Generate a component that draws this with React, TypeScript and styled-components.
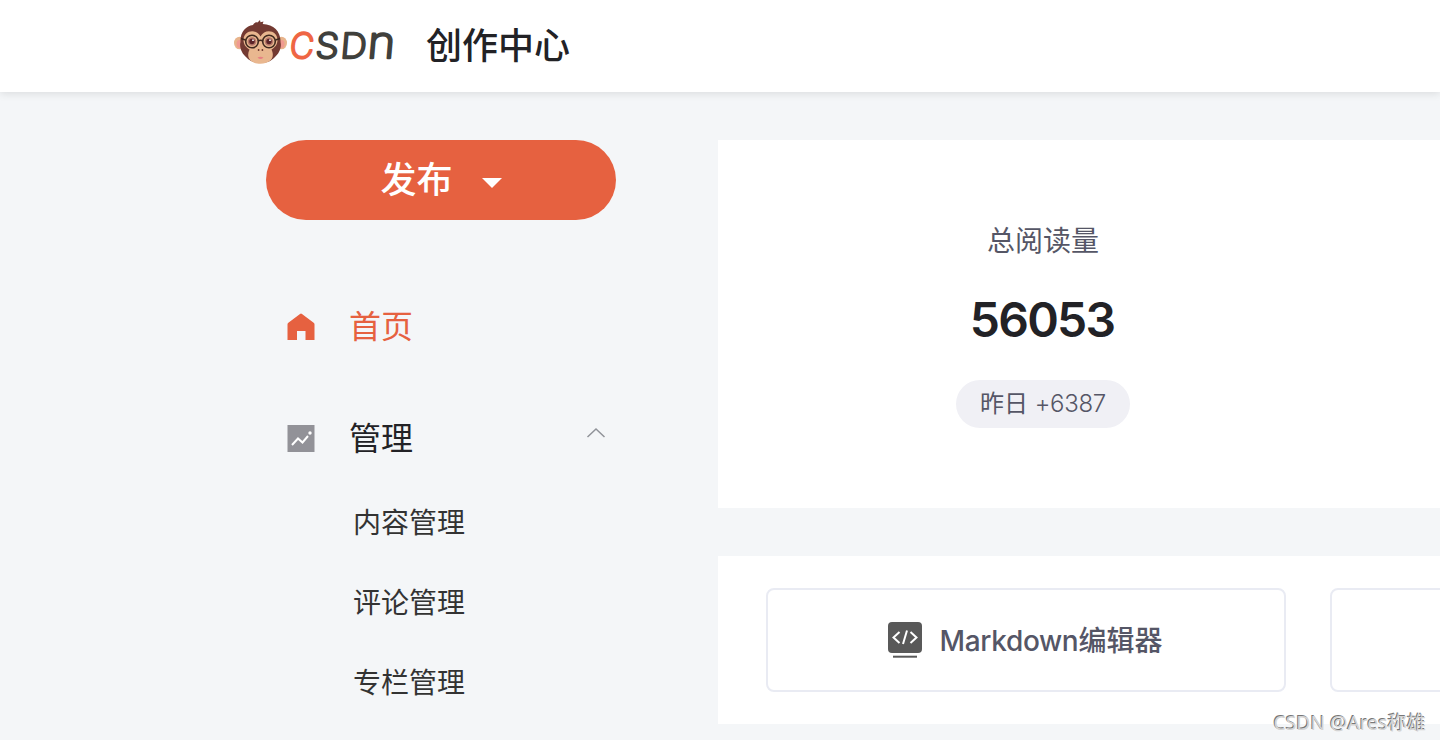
import React from "react";
import styled, { createGlobalStyle } from "styled-components";

const GlobalStyle = createGlobalStyle`
  * { box-sizing: border-box; }
  body {
    margin: 0;
    background: #f4f6f8;
    color: #222226;
    font-family: Inter, "Noto Sans CJK SC", sans-serif;
  }
`;

const Page = styled.div`
  width: 100%;
  height: 740px;
  overflow: hidden;
  position: relative;
  display: flex;
  flex-direction: column;
`;

const Header = styled.header`
  flex: none;
  height: 92px;
  padding-left: 232px;
  display: flex;
  align-items: center;
  background: #fff;
  box-shadow: 0 2px 8px rgba(0, 0, 0, 0.1);
`;

const HeaderTitle = styled.h1`
  margin: 0 0 0 26px;
  font-size: 36px;
  line-height: 52px;
  font-weight: 500;
`;

const Body = styled.div`
  display: flex;
  padding: 48px 0 0 266px;
`;

const Sidebar = styled.aside`
  flex: none;
  width: 350px;
  margin-right: 102px;
`;

const PublishButton = styled.button`
  width: 350px;
  height: 80px;
  padding: 0;
  border: 0;
  border-radius: 40px;
  background: #e66140;
  color: #fff;
  font: 500 36px/52px Inter, "Noto Sans CJK SC", sans-serif;
  display: flex;
  align-items: center;
  justify-content: center;
  gap: 29px;
`;

const Caret = styled.span`
  margin-top: 5px;
  border: 10px solid transparent;
  border-top-color: #fff;
  border-bottom: 0;
`;

const MenuItem = styled.div<{ $active?: boolean }>`
  height: 112px;
  padding: 0 10px 0 20px;
  display: flex;
  align-items: center;
  font-size: 32px;
  line-height: 46px;
  color: ${(p) => (p.$active ? "#e66140" : "#222226")};
`;

const Menu = styled.nav`
  margin-top: 51px;
`;

const MenuLabel = styled.span`
  margin-left: 32px;
  flex: 1;
`;

const SubMenu = styled.div`
  margin-top: -12px;
`;

const SubItem = styled.div`
  height: 80px;
  padding-left: 87px;
  font-size: 28px;
  line-height: 80px;
  color: #333;
`;

const Main = styled.main`
  flex: none;
  width: 1200px;
  display: flex;
  flex-direction: column;
  gap: 48px;
`;

const StatsPanel = styled.section`
  height: 368px;
  background: #fff;
`;

const Stat = styled.div`
  width: 650px;
  padding-top: 81px;
  display: flex;
  flex-direction: column;
  align-items: center;
`;

const StatName = styled.div`
  font-size: 28px;
  line-height: 40px;
  color: #555666;
`;

const StatValue = styled.div`
  margin: 23px 2px 25px 0;
  font-size: 48px;
  line-height: 71px;
  font-weight: 600;
  letter-spacing: -1.8px;
`;

const StatBadge = styled.div`
  width: 174px;
  height: 48px;
  border-radius: 24px;
  background: #f0f0f5;
  color: #555666;
  font-size: 24px;
  line-height: 48px;
  text-align: center;
  white-space: nowrap;
`;

const BadgeDelta = styled.span`
  font-weight: 300;
  letter-spacing: -0.3px;
`;

const EditorPanel = styled.section`
  height: 168px;
  padding: 32px 48px;
  display: flex;
  gap: 44px;
  background: #fff;
`;

const EditorCard = styled.div`
  flex: none;
  width: 520px;
  height: 104px;
  border: 2px solid #e9ebf3;
  border-radius: 8px;
  display: flex;
  align-items: center;
  justify-content: center;
  gap: 17px;
  padding-right: 3px;
  color: #555666;
  font-size: 28px;
  line-height: 40px;
  font-weight: 500;
`;

const EditorName = styled.span`
  padding-top: 2px;
`;

const EditorFormat = styled.span`
  letter-spacing: -0.35px;
`;

const Watermark = styled.div`
  position: absolute;
  right: 14px;
  bottom: 3px;
  font: 19.3px/28px "Noto Sans", "Noto Sans CJK SC", sans-serif;
  color: #d4d4d4;
  text-shadow: -1px -1px 0 #777;
`;

const LogoMark = styled.svg`
  flex: none;
  width: 168px;
  height: 80px;
  margin-top: -8px;
`;

const Wordmark = styled.text`
  font-family: Inter, sans-serif;
  font-weight: 200;
  stroke-width: 2.4px;
  stroke-linejoin: round;
`;

function Logo() {
  return (
    <LogoMark viewBox="232 2 168 80" aria-label="CSDN">
      <ellipse cx="239.5" cy="43" rx="5.5" ry="6.3" fill="#e8b48c" />
      <ellipse cx="281.5" cy="43" rx="5.5" ry="6.3" fill="#e8b48c" />
      <ellipse cx="239.5" cy="44" rx="3" ry="4" fill="#f09a91" />
      <ellipse cx="281.5" cy="44" rx="3" ry="4" fill="#f09a91" />
      <path
        d="M253 25 C254 23 256 22 257.5 22.5 L260 20 L260.5 22.3 L263.5 21.5 L262.7 24 C274 24.5 281 32 280.5 42 C282 47 279 54 275 57 C271 61.5 266 63 260.5 63 C255 63 250 61.5 246 57 C242 54 239 47 240.5 42 C240 32 246 26 253 25Z"
        fill="#733a32"
      />
      <path
        d="M260.5 36.5 C256 28 243.5 30.5 243.5 40 C243.5 44.5 246 47.5 249.5 49.5 C245.5 58 251 63.8 260.5 63.8 C270 63.8 275.5 58 271.5 49.5 C275 47.5 277.5 44.5 277.5 40 C277.5 30.5 265 28 260.5 36.5Z"
        fill="#e9b78f"
      />
      <g fill="#b8796b">
        <circle cx="252" cy="41.5" r="4.3" />
        <circle cx="269" cy="41.5" r="4.3" />
      </g>
      <g fill="#5b2428">
        <circle cx="252" cy="41.5" r="2.7" />
        <circle cx="269" cy="41.5" r="2.7" />
      </g>
      <g fill="#fff">
        <circle cx="253" cy="40.2" r="0.9" />
        <circle cx="270" cy="40.2" r="0.9" />
      </g>
      <g fill="none" stroke="#40291f" strokeWidth="1.6">
        <circle cx="252" cy="41.5" r="6.3" />
        <circle cx="269" cy="41.5" r="6.3" />
        <path d="M258 41Q260.5 39.5 263 41M245.5 40L241 38.5M275.5 40L280 38.5" />
      </g>
      <circle cx="258.6" cy="50" r="0.9" fill="#6b352c" />
      <circle cx="262.4" cy="50" r="0.9" fill="#6b352c" />
      <path d="M257.5 57.5Q260.5 55.8 263.5 57.5Q260.5 60.5 257.5 57.5Z" fill="#e87f83" />
      <g transform="translate(0 57.5) skewX(-5)">
        <Wordmark transform="translate(289 0) scale(.96 1)" fontSize="34.5" fill="#ef6644" stroke="#ef6644">C</Wordmark>
        <Wordmark transform="translate(314.7 0) scale(1.08 1)" fontSize="34.5" fill="#40403c" stroke="#40403c">S</Wordmark>
        <Wordmark transform="translate(339.7 0) scale(1.05 1)" fontSize="34.5" fill="#40403c" stroke="#40403c">D</Wordmark>
        <Wordmark transform="translate(366.5 0) scale(1.06 1)" fontSize="44.5" fill="#40403c" stroke="#40403c">n</Wordmark>
      </g>
    </LogoMark>
  );
}

const HomeIcon = () => (
  <svg width="31" height="32" viewBox="0 0 31 32">
    <path d="M15 2.5Q15.5 2.5 16 3L28 12Q28.5 12.5 28.5 13.5V29H19.5V20H11V29H1.5V13.5Q1.5 12.5 2 12L14 3Q14.5 2.5 15 2.5Z" fill="#e66140" />
  </svg>
);

const ChartIcon = () => (
  <svg width="31" height="32" viewBox="0 0 31 32">
    <rect x="1.5" y="2" width="27" height="27" fill="#929298" />
    <path d="M6 22L12 15.5L16.5 19.5L22 13" fill="none" stroke="#fff" strokeWidth="2" />
    <circle cx="24" cy="10" r="1.7" fill="#fff" />
  </svg>
);

const Chevron = styled.svg`
  margin-top: -12px;
`;

const ChevronIcon = () => (
  <Chevron width="20" height="12" viewBox="0 0 20 12">
    <path d="M1.5 10L10 2L18.5 10" fill="none" stroke="#909399" strokeWidth="1.5" />
  </Chevron>
);

const MarkdownIcon = () => (
  <svg width="36" height="38" viewBox="0 0 36 38">
    <rect x="1" y="1" width="34" height="31" rx="4" fill="#595959" />
    <path d="M12.5 11L6.5 16.5L12.5 22M23.5 11L29.5 16.5L23.5 22M20 9.5L16 23" fill="none" stroke="#fff" strokeWidth="2" />
    <path d="M6 35.7H30" stroke="#595959" strokeWidth="2" />
  </svg>
);

export default function App() {
  return (
    <Page>
      <GlobalStyle />
      <Header>
        <Logo />
        <HeaderTitle>创作中心</HeaderTitle>
      </Header>
      <Body>
        <Sidebar>
          <PublishButton>
            发布
            <Caret />
          </PublishButton>
          <Menu>
            <MenuItem $active>
              <HomeIcon />
              <MenuLabel>首页</MenuLabel>
            </MenuItem>
            <MenuItem>
              <ChartIcon />
              <MenuLabel>管理</MenuLabel>
              <ChevronIcon />
            </MenuItem>
            <SubMenu>
              <SubItem>内容管理</SubItem>
              <SubItem>评论管理</SubItem>
              <SubItem>专栏管理</SubItem>
            </SubMenu>
          </Menu>
        </Sidebar>
        <Main>
          <StatsPanel>
            <Stat>
              <StatName>总阅读量</StatName>
              <StatValue>56053</StatValue>
              <StatBadge>
                昨日 <BadgeDelta>+6387</BadgeDelta>
              </StatBadge>
            </Stat>
          </StatsPanel>
          <EditorPanel>
            <EditorCard>
              <MarkdownIcon />
              <EditorName>
                <EditorFormat>Markdown</EditorFormat>编辑器
              </EditorName>
            </EditorCard>
            <EditorCard />
          </EditorPanel>
        </Main>
      </Body>
      <Watermark>CSDN @Ares称雄</Watermark>
    </Page>
  );
}
